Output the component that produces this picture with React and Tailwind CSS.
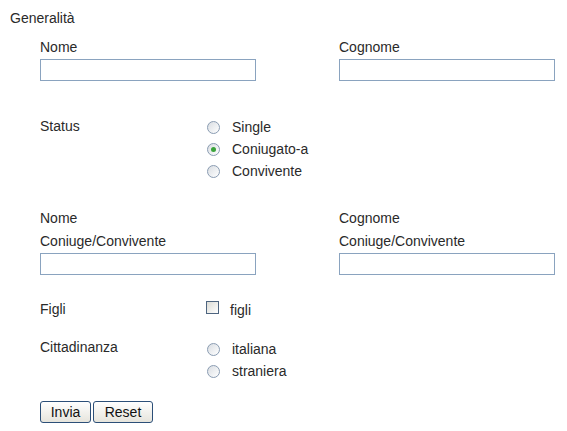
import React from "react";

// classic-looking radio, drawn with spans so it matches the old browser look
function Radio({ checked, label }) {
  return (
    <div className="flex h-[22px] items-center">
      <span className="ml-[1px] flex h-[13px] w-[13px] items-center justify-center rounded-full border border-[#8a9cb2] bg-gradient-to-br from-[#d9dde2] to-white">
        {checked && <span className="h-[5px] w-[5px] rounded-full bg-[#3aa33a]" />}
      </span>
      <span className="ml-[12px]">{label}</span>
    </div>
  );
}

function TextBox() {
  return (
    <div className="h-[22px] w-[216px] border border-[#8aa3bf] bg-white" />
  );
}

function Button({ children, w }) {
  return (
    <button
      type="button"
      className={`h-[22px] ${w} rounded-[3px] border border-[#2c4f78] bg-gradient-to-b from-white to-[#e6e4dc] text-[14px] leading-none text-[#111]`}
    >
      {children}
    </button>
  );
}

export default function App() {
  return (
    <div
      className="h-[431px] w-[567px] bg-white text-[14px] leading-[16px] text-[#2a2a2a]"
      style={{ fontFamily: '"Liberation Sans", Arial, sans-serif' }}
    >
      <div className="pl-[10px] pt-[10px]">Generalità</div>

      <div className="pl-[40px]">
        {/* Nome / Cognome */}
        <div className="mt-[13px] flex">
          <div className="w-[299px]">
            <div>Nome</div>
            <div className="mt-[4px]">
              <TextBox />
            </div>
          </div>
          <div>
            <div>Cognome</div>
            <div className="mt-[4px]">
              <TextBox />
            </div>
          </div>
        </div>

        {/* Status */}
        <div className="mt-[35px] flex">
          <div className="w-[166px] pt-[2px]">Status</div>
          <div>
            <Radio label="Single" />
            <Radio label="Coniugato-a" checked />
            <Radio label="Convivente" />
          </div>
        </div>

        {/* Coniuge */}
        <div className="mt-[25px] flex">
          <div className="w-[299px]">
            <div className="leading-[23px]">Nome</div>
            <div className="leading-[23px]">Coniuge/Convivente</div>
            <TextBox />
          </div>
          <div>
            <div className="leading-[23px]">Cognome</div>
            <div className="leading-[23px]">Coniuge/Convivente</div>
            <TextBox />
          </div>
        </div>

        {/* Figli */}
        <div className="mt-[26px] flex">
          <div className="w-[166px]">Figli</div>
          <div className="flex items-start">
            <span className="h-[13px] w-[13px] border border-[#4e6580] bg-gradient-to-br from-[#dcdcd6] to-white" />
            <span className="ml-[11px] pt-[1px]">figli</span>
          </div>
        </div>

        {/* Cittadinanza */}
        <div className="mt-[20px] flex">
          <div className="w-[166px] pt-[1px]">Cittadinanza</div>
          <div>
            <Radio label="italiana" />
            <Radio label="straniera" />
          </div>
        </div>

        <div className="mt-[19px] flex gap-[2px]">
          <Button w="w-[51px]">Invia</Button>
          <Button w="w-[60px]">Reset</Button>
        </div>
      </div>
    </div>
  );
}
